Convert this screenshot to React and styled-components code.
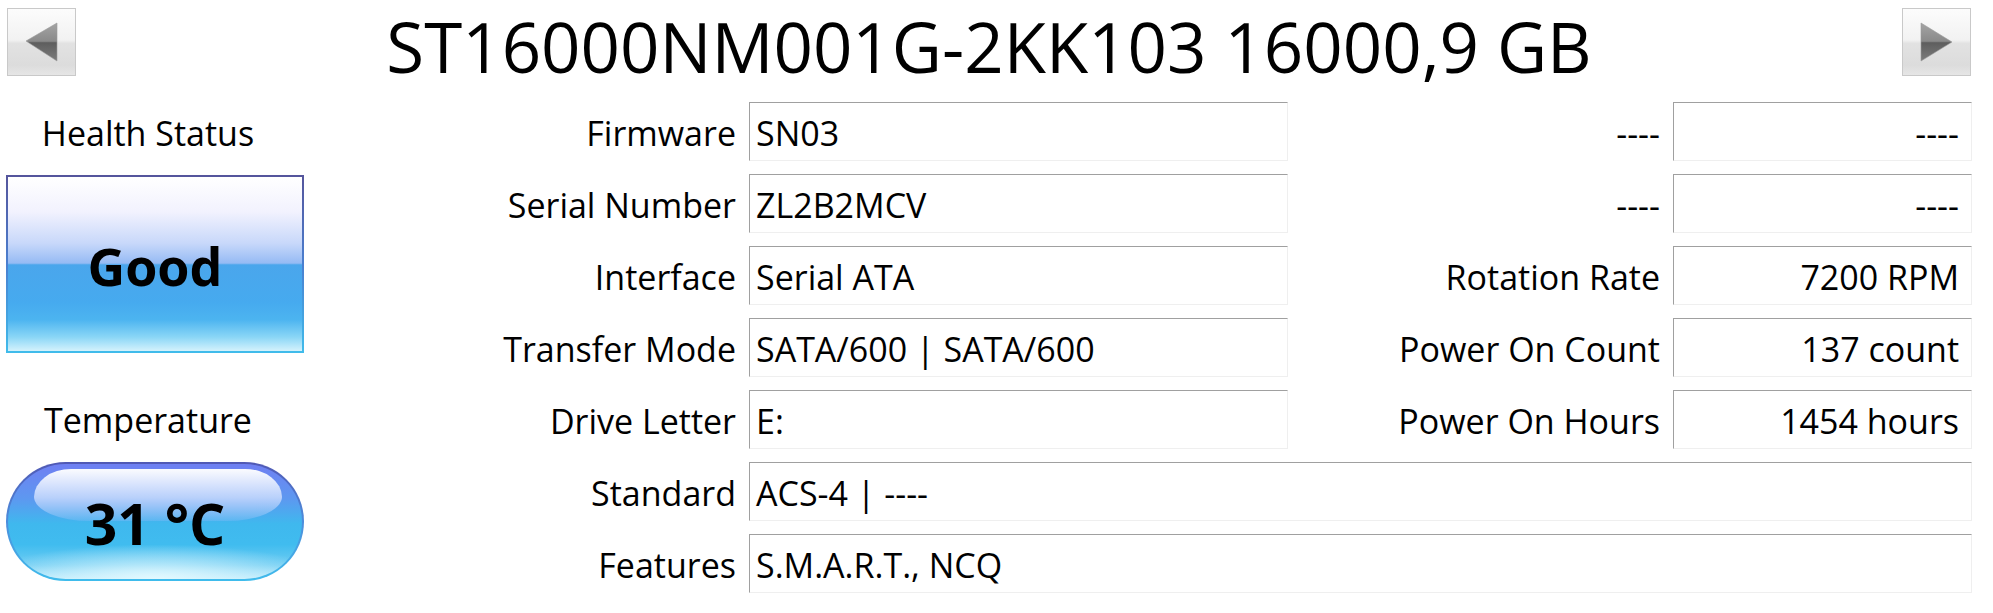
import React from "react";
import styled, { createGlobalStyle } from "styled-components";

const GlobalStyle = createGlobalStyle`
	html, body {
		margin: 0;
		padding: 0;
		background: #ffffff;
	}

	body {
		font-family: "Open Sans", "Noto Sans", sans-serif;
		color: #000000;
	}
`;

const Page = styled.div`
	width: 1993px;
	height: 613px;
	overflow: hidden;
	background: #ffffff;
`;

const Header = styled.div`
	display: flex;
	align-items: flex-start;
	height: 102px;
	box-sizing: border-box;
	padding: 0 22px 0 7px;
`;

const NavButton = styled.div`
	width: 69px;
	height: 68px;
	margin-top: 8px;
	box-sizing: border-box;
	border: 1px solid #c9c9c9;
	background: linear-gradient(
		#fcfcfc 0%,
		#f2f2f2 47%,
		#e2e2e2 52%,
		#dcdcdc 85%,
		#e6e6e6 100%
	);
	display: flex;
	align-items: center;
	justify-content: center;
	flex-shrink: 0;
`;

const Title = styled.h1`
	flex: 1;
	margin: 0;
	font-size: 69px;
	font-weight: 400;
	line-height: 92px;
	text-align: center;
	white-space: nowrap;
`;

const Body = styled.div`
	display: flex;
	align-items: flex-start;
`;

const LeftColumn = styled.div`
	width: 310px;
	box-sizing: border-box;
	padding-left: 6px;
	display: flex;
	flex-direction: column;
`;

const SideLabel = styled.div`
	width: 284px;
	height: 59px;
	margin-top: ${(p) => p.$top || 0}px;
	margin-bottom: 14px;
	display: flex;
	align-items: center;
	justify-content: center;
	padding-top: 3px;
	box-sizing: border-box;
	font-size: 34px;
	white-space: nowrap;
`;

const HealthBox = styled.div`
	width: 298px;
	height: 178px;
	box-sizing: border-box;
	padding: 2px;
	background: linear-gradient(#55559c, #4a7fd0 50%, #40bceb);
`;

const HealthFace = styled.div`
	height: 100%;
	display: flex;
	align-items: center;
	justify-content: center;
	background: linear-gradient(
		#ffffff 0%,
		#f2f2fe 20%,
		#c8d8fa 38%,
		#96bbf4 49.5%,
		#4aa6ec 50.5%,
		#46aaef 72%,
		#4cb4f0 82%,
		#8ad6f6 92%,
		#d4f2fc 100%
	);
	font-size: 52px;
	font-weight: 700;
	padding-top: 2px;
	box-sizing: border-box;
`;

const TempPill = styled.div`
	position: relative;
	width: 298px;
	height: 119px;
	box-sizing: border-box;
	border-radius: 60px;
	padding: 2px;
	background: linear-gradient(#5058b4, #4d8ddc 50%, #3fbcec);
`;

const TempFace = styled.div`
	position: relative;
	height: 100%;
	border-radius: 58px;
	overflow: hidden;
	display: flex;
	align-items: center;
	justify-content: center;
	background:
		radial-gradient(ellipse 60% 30% at 50% 100%, rgba(230, 250, 255, 0.95), rgba(230, 250, 255, 0) 100%),
		linear-gradient(#6f7ff2 0%, #5d98f0 30%, #3fb8ee 52%, #40bcef 70%, #6fcdf3 88%, #b8e9fb 100%);
	font-size: 57px;
	font-weight: 700;

	&::before {
		content: "";
		position: absolute;
		left: 26px;
		right: 20px;
		top: 5px;
		height: 52px;
		border-radius: 40px 40px 60px 60px / 30px 30px 26px 26px;
		background: linear-gradient(rgba(255, 255, 255, 0.97), rgba(215, 228, 255, 0.75) 55%, rgba(160, 190, 250, 0.25));
	}
`;

const TempText = styled.span`
	position: relative;
	padding-top: 2px;
`;

const InfoGrid = styled.div`
	display: grid;
	grid-template-columns: 439px 539px 385px 299px;
	grid-auto-rows: 59px;
	row-gap: 13px;
`;

const Label = styled.div`
	display: flex;
	align-items: center;
	justify-content: flex-end;
	padding: 3px 13px 0 0;
	font-size: 34px;
	white-space: nowrap;
`;

const Value = styled.div`
	grid-column: ${(p) => (p.$wide ? "span 3" : "auto")};
	display: flex;
	align-items: center;
	justify-content: ${(p) => (p.$right ? "flex-end" : "flex-start")};
	box-sizing: border-box;
	padding: 3px ${(p) => (p.$right ? "12px" : "0")} 0 ${(p) => (p.$right ? "0" : "6px")};
	border-top: 1px solid #a0a0a0;
	border-left: 1px solid #a0a0a0;
	border-right: 1px solid #efefef;
	border-bottom: 1px solid #efefef;
	font-size: 34px;
	white-space: nowrap;
`;

function Arrow({ dir }) {
	const points = dir === "left" ? "1,19 32,1 32,39" : "1,1 1,39 32,20";
	const id = "arrowFill-" + dir;
	return (
		<svg width="34" height="40" viewBox="0 0 34 40">
			<defs>
				<linearGradient id={id} x1="0" y1="0" x2="0" y2="1">
					<stop offset="0%" stopColor="#a4a4a4" />
					<stop offset="48%" stopColor="#8a8a8a" />
					<stop offset="52%" stopColor="#5e5e5e" />
					<stop offset="100%" stopColor="#7c7c7c" />
				</linearGradient>
			</defs>
			<polygon points={points} fill={`url(#${id})`} stroke="#9a9a9a" strokeWidth="0.6" strokeLinejoin="round" />
		</svg>
	);
}

const rows = [
	{ label: "Firmware", value: "SN03", label2: "----", value2: "----" },
	{ label: "Serial Number", value: "ZL2B2MCV", label2: "----", value2: "----" },
	{ label: "Interface", value: "Serial ATA", label2: "Rotation Rate", value2: "7200 RPM" },
	{ label: "Transfer Mode", value: "SATA/600 | SATA/600", label2: "Power On Count", value2: "137 count" },
	{ label: "Drive Letter", value: "E:", label2: "Power On Hours", value2: "1454 hours" },
	{ label: "Standard", value: "ACS-4 | ----", wide: true },
	{ label: "Features", value: "S.M.A.R.T., NCQ", wide: true },
];

export default function App() {
	const cells = rows.map((row, index) => {
		if (row.wide) {
			return (
				<React.Fragment key={index}>
					<Label>{row.label}</Label>
					<Value $wide>{row.value}</Value>
				</React.Fragment>
			);
		}
		return (
			<React.Fragment key={index}>
				<Label>{row.label}</Label>
				<Value>{row.value}</Value>
				<Label>{row.label2}</Label>
				<Value $right>{row.value2}</Value>
			</React.Fragment>
		);
	});

	return (
		<>
			<GlobalStyle />
			<Page>
				<Header>
					<NavButton>
						<Arrow dir="left" />
					</NavButton>
					<Title>ST16000NM001G-2KK103 16000,9 GB</Title>
					<NavButton>
						<Arrow dir="right" />
					</NavButton>
				</Header>
				<Body>
					<LeftColumn>
						<SideLabel>Health Status</SideLabel>
						<HealthBox>
							<HealthFace>Good</HealthFace>
						</HealthBox>
						<SideLabel $top={36}>Temperature</SideLabel>
						<TempPill>
							<TempFace>
								<TempText>31 °C</TempText>
							</TempFace>
						</TempPill>
					</LeftColumn>
					<InfoGrid>{cells}</InfoGrid>
				</Body>
			</Page>
		</>
	);
}
